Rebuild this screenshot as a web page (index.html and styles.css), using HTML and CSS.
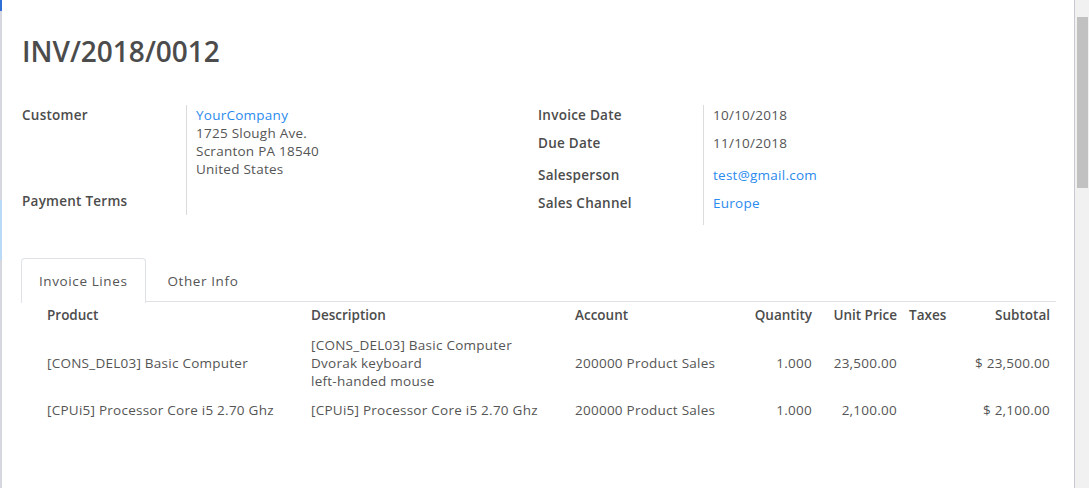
FILE: index.html
```html
<!DOCTYPE html>
<html>
<head>
<meta charset="utf-8">
<link rel="stylesheet" href="styles.css">
</head>
<body>
<div class="frame">
  <div class="edge"></div>
  <main class="sheet">
    <h1 class="title">INV/2018/0012</h1>
    <div class="groups">
      <div class="group group-left">
        <div class="lbl">Customer</div>
        <div class="val">
          <a class="link">YourCompany</a><br>
          1725 Slough Ave.<br>
          Scranton PA 18540<br>
          United States
        </div>
        <div class="lbl">Payment Terms</div>
        <div class="val"></div>
      </div>
      <div class="group group-right">
        <div class="lbl">Invoice Date</div>
        <div class="val">10/10/2018</div>
        <div class="lbl">Due Date</div>
        <div class="val">11/10/2018</div>
        <div class="lbl">Salesperson</div>
        <div class="val"><a class="link">test@gmail.com</a></div>
        <div class="lbl">Sales Channel</div>
        <div class="val"><a class="link">Europe</a></div>
      </div>
    </div>
    <div class="tabs">
      <div class="tab active">Invoice Lines</div>
      <div class="tab">Other Info</div>
    </div>
    <div class="lines">
      <div class="row head">
        <div></div>
        <div>Product</div>
        <div>Description</div>
        <div>Account</div>
        <div class="num">Quantity</div>
        <div class="num">Unit Price</div>
        <div class="tax">Taxes</div>
        <div class="num">Subtotal</div>
        <div></div>
      </div>
      <div class="row">
        <div></div>
        <div>[CONS_DEL03] Basic Computer</div>
        <div>[CONS_DEL03] Basic Computer<br>Dvorak keyboard<br>left-handed mouse</div>
        <div>200000 Product Sales</div>
        <div class="num">1.000</div>
        <div class="num">23,500.00</div>
        <div class="tax"></div>
        <div class="num">$ 23,500.00</div>
        <div></div>
      </div>
      <div class="row">
        <div></div>
        <div>[CPUi5] Processor Core i5 2.70 Ghz</div>
        <div>[CPUi5] Processor Core i5 2.70 Ghz</div>
        <div>200000 Product Sales</div>
        <div class="num">1.000</div>
        <div class="num">2,100.00</div>
        <div class="tax"></div>
        <div class="num">$ 2,100.00</div>
        <div></div>
      </div>
    </div>
  </main>
  <div class="scroll"><div class="thumb"></div></div>
</div>
</body>
</html>
```

FILE: styles.css
```css
html, body {
  margin: 0;
  padding: 0;
  background: #ffffff;
}
body {
  font-family: "Open Sans", "Liberation Sans", sans-serif;
  font-size: 13.5px;
  letter-spacing: 0.25px;
  line-height: 18px;
  color: #4c4c4c;
}
.frame {
  display: flex;
  height: 488px;
  overflow: hidden;
}
.edge {
  width: 2px;
  flex: none;
  background: linear-gradient(to bottom, #2f6fd6 0, #2f6fd6 11px, #d5d6de 11px, #d5d6de 200px, #b9d9f7 200px, #b9d9f7 260px, #d5d6de 260px);
}
.sheet {
  flex: 1;
  padding: 0 18px 0 20px;
  border-right: 1px solid #c9c9d2;
}
.title {
  margin: 33px 0 0;
  font-size: 28px;
  line-height: 36px;
  font-weight: 600;
  letter-spacing: 0;
  color: #4c4c4c;
}
.groups {
  display: flex;
  margin-top: 36px;
}
.group {
  display: grid;
  align-content: start;
}
.group-left {
  width: 516px;
  grid-template-columns: 164px 1fr;
  grid-template-rows: 86px 24px;
}
.group-right {
  flex: 1;
  grid-template-columns: 165px 1fr;
  grid-template-rows: 28px 32px 28px 32px;
}
.lbl {
  font-weight: 600;
  padding-top: 1px;
  color: #4c4c4c;
}
.val {
  border-left: 1px solid #dcdcdc;
  padding: 1px 0 0 9px;
  color: #555555;
}
.link {
  color: #2b8bee;
  text-decoration: none;
}
.tabs {
  display: flex;
  margin-top: 33px;
  margin-left: -1px;
  border-bottom: 1px solid #dee2e6;
  height: 43px;
}
.tab {
  padding: 13px 18px 11px 17px;
  margin-right: 3px;
  letter-spacing: 0.6px;
  color: #555555;
  border: 1px solid transparent;
  border-bottom: none;
}
.tab.active {
  border-color: #dee2e6;
  border-radius: 4px 4px 0 0;
  background: #ffffff;
  height: 20px;
  margin-bottom: -1px;
}
.lines {
  color: #555555;
}
.row {
  display: grid;
  grid-template-columns: 25px 264px 264px 165px 72px 85px 63px 90px 6px;
  align-items: center;
  padding: 6px 0 5px;
}
.row.head {
  font-weight: 600;
  letter-spacing: 0;
  color: #4c4c4c;
  padding: 4px 0 6px;
}
.num {
  text-align: right;
}
.tax {
  padding-left: 12px;
}
.scroll {
  width: 14px;
  flex: none;
  background: #f1f1f1;
  position: relative;
}
.thumb {
  position: absolute;
  left: 2px;
  right: 1px;
  top: 17px;
  height: 171px;
  background: #c1c1c1;
}
```
